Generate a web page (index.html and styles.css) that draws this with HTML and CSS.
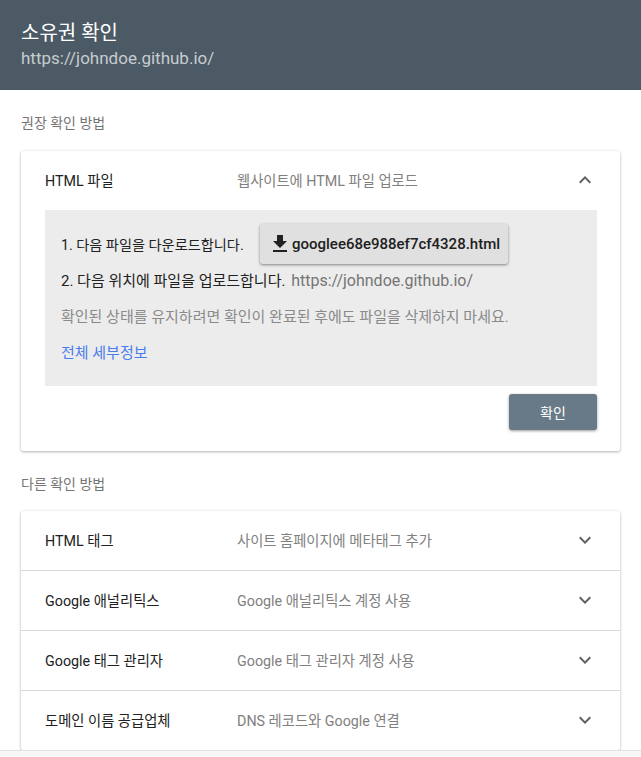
FILE: index.html
```html
<!DOCTYPE html>
<html lang="ko">
<head>
<meta charset="utf-8">
<title>소유권 확인</title>
<link rel="stylesheet" href="styles.css">
</head>
<body>
<header class="top">
  <div class="top-title">소유권 확인</div>
  <div class="top-url">https://johndoe.github.io/</div>
</header>
<main class="content">
  <div class="label">권장 확인 방법</div>
  <section class="card">
    <div class="row">
      <div class="row-name">HTML 파일</div>
      <div class="row-desc">웹사이트에 HTML 파일 업로드</div>
      <svg class="chev" width="24" height="24" viewBox="0 0 24 24"><path d="M7.41 15.41 12 10.83l4.59 4.58L18 14l-6-6-6 6z"/></svg>
    </div>
    <div class="panel">
      <div class="step-first">
        <span>1. 다음 파일을 다운로드합니다.</span>
        <button class="dl" type="button">
          <svg width="24" height="24" viewBox="0 0 24 24"><path d="M19 9h-4V3H9v6H5l7 7 7-7zM5 18v2h14v-2H5z"/></svg>
          <span>googlee68e988ef7cf4328.html</span>
        </button>
      </div>
      <div class="step">2. 다음 위치에 파일을 업로드합니다. <span class="url">https://johndoe.github.io/</span></div>
      <div class="step muted">확인된 상태를 유지하려면 확인이 완료된 후에도 파일을 삭제하지 마세요.</div>
      <a class="step link" href="#">전체 세부정보</a>
    </div>
    <div class="actions"><button class="verify" type="button">확인</button></div>
  </section>
  <div class="label label-second">다른 확인 방법</div>
  <section class="card">
    <div class="row">
      <div class="row-name">HTML 태그</div>
      <div class="row-desc">사이트 홈페이지에 메타태그 추가</div>
      <svg class="chev" width="24" height="24" viewBox="0 0 24 24"><path d="M7.41 8.59 12 13.17l4.59-4.58L18 10l-6 6-6-6z"/></svg>
    </div>
    <div class="row row-line">
      <div class="row-name">Google 애널리틱스</div>
      <div class="row-desc">Google 애널리틱스 계정 사용</div>
      <svg class="chev" width="24" height="24" viewBox="0 0 24 24"><path d="M7.41 8.59 12 13.17l4.59-4.58L18 10l-6 6-6-6z"/></svg>
    </div>
    <div class="row row-line">
      <div class="row-name">Google 태그 관리자</div>
      <div class="row-desc">Google 태그 관리자 계정 사용</div>
      <svg class="chev" width="24" height="24" viewBox="0 0 24 24"><path d="M7.41 8.59 12 13.17l4.59-4.58L18 10l-6 6-6-6z"/></svg>
    </div>
    <div class="row row-line">
      <div class="row-name">도메인 이름 공급업체</div>
      <div class="row-desc">DNS 레코드와 Google 연결</div>
      <svg class="chev" width="24" height="24" viewBox="0 0 24 24"><path d="M7.41 8.59 12 13.17l4.59-4.58L18 10l-6 6-6-6z"/></svg>
    </div>
  </section>
</main>
<div class="bottom"></div>
</body>
</html>
```
FILE: styles.css
```css
* { box-sizing: border-box; }
html, body { margin: 0; height: 100%; overflow: hidden; }
body {
  background: #fff;
  color: #212121;
  font-family: Roboto, "Noto Sans CJK KR", sans-serif;
  font-size: 14px;
}
.top {
  height: 90px;
  background: #4b5a65;
  padding: 20px 21px 0;
}
.top-title { color: #fff; font-size: 20px; line-height: 26px; }
.top-url { color: rgba(255,255,255,.7); font-size: 17px; line-height: 24px; }
.content { padding: 0 21px; width: 641px; }
.label { color: #757575; font-size: 14px; line-height: 20px; padding-top: 23px; height: 61px; }
.label-second { height: 60px; padding-top: 23px; }
.card {
  background: #fff;
  border-radius: 2px;
  box-shadow: 0 1px 3px rgba(0,0,0,.3), 0 0 2px rgba(0,0,0,.06);
}
.row {
  display: flex;
  align-items: center;
  height: 59px;
  padding: 0 23px 2px 24px;
}
.row-line { height: 60px; border-top: 1px solid #d8d8d8; }
.row-name { width: 192px; font-size: 14.3px; color: #212121; }
.row-desc { flex: 1; font-size: 14.3px; color: #808080; }
.chev { fill: #616161; flex: none; }
.panel {
  background: #ececec;
  margin: 0 23px 0 24px;
  height: 176px;
  padding: 14px 16px 0;
  font-size: 15px;
}
.step { display: block; line-height: 20px; margin-bottom: 16px; }
.step-first { display: flex; align-items: center; justify-content: space-between; width: 447px; margin-bottom: 7px; height: 40px; font-size: 14.2px; }
.url { color: #757575; font-size: 16px; margin-left: 2px; }
.muted { color: #8a8a8a; }
.link { color: #4a7cf0; text-decoration: none; }
.dl {
  display: flex;
  align-items: center;
  gap: 0;
  width: 248px;
  height: 40px;
  padding: 0 8px;
  border: 0;
  border-radius: 3px;
  background: #e0e0e0;
  color: #212121;
  font: 500 15px Roboto, "Noto Sans CJK KR", sans-serif;
  box-shadow: 0 1px 3px rgba(0,0,0,.45);
}
.dl svg { fill: #212121; flex: none; }
.actions { display: flex; justify-content: flex-end; padding: 8px 23px 21px 0; }
.verify {
  width: 88px;
  height: 36px;
  border: 0;
  border-radius: 3px;
  background: #687a88;
  color: #fff;
  font: 400 14px Roboto, "Noto Sans CJK KR", sans-serif;
  box-shadow: 0 1px 3px rgba(0,0,0,.4);
}
.bottom {
  position: fixed;
  left: 0; right: 0; bottom: 0;
  height: 7px;
  background: #f7f7f7;
  border-top: 1px solid #e0e0e0;
}
```
